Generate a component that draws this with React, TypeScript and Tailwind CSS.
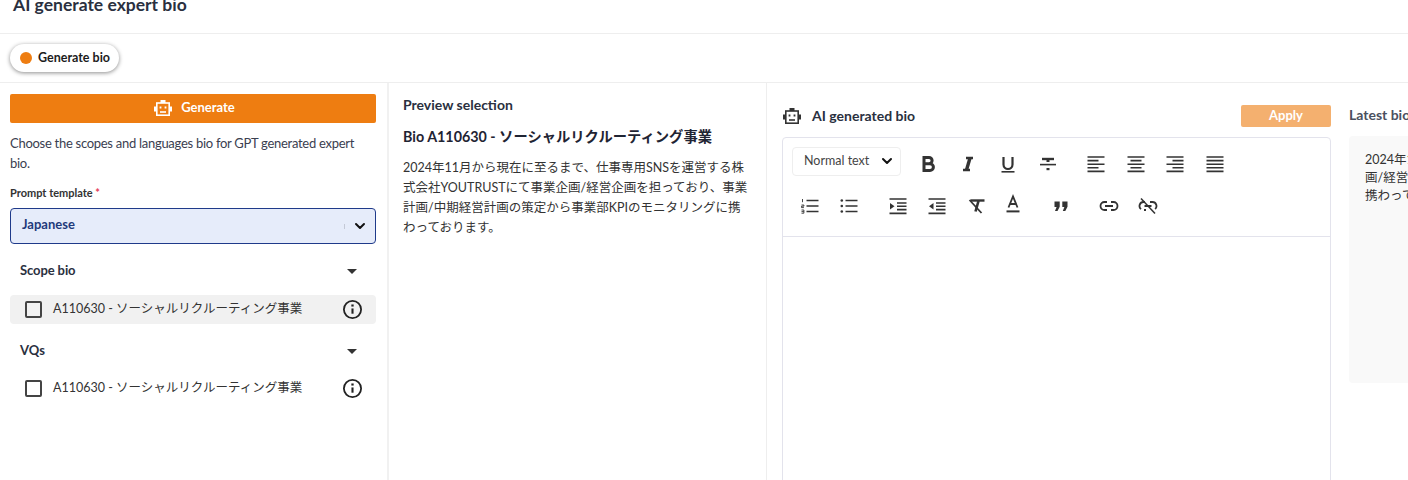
import { ChevronDown } from 'lucide-react'

const font = "font-['Lato','Noto_Sans_CJK_JP',sans-serif]"

function RobotIcon({ className }: { className?: string }) {
  return (
    <svg viewBox="0 0 20 20" className={className} fill="none" stroke="currentColor" strokeWidth="1.6">
      <rect x="3.8" y="5" width="12.4" height="12.2" />
      <rect x="7.5" y="2" width="5" height="3" fill="currentColor" stroke="none" />
      <rect x="1" y="8.5" width="2.4" height="5" fill="currentColor" stroke="none" />
      <rect x="16.6" y="8.5" width="2.4" height="5" fill="currentColor" stroke="none" />
      <path d="M7.5 8.6v2M12.5 8.6v2" strokeWidth="1.8" />
      <path d="M7 14h6" />
    </svg>
  )
}

function Ico({ children }: { children: React.ReactNode }) {
  return (
    <svg viewBox="0 0 20 20" className="h-5 w-5 text-[#333]" fill="none" stroke="currentColor" strokeWidth="1.6">
      {children}
    </svg>
  )
}

const alignPaths = {
  left: 'M1.5 3h17M1.5 6.6h11M1.5 10.2h17M1.5 13.8h11M1.5 17.4h17',
  center: 'M1.5 3h17M4.5 6.6h11M1.5 10.2h17M4.5 13.8h11M1.5 17.4h17',
  right: 'M1.5 3h17M7.5 6.6h11M1.5 10.2h17M7.5 13.8h11M1.5 17.4h17',
  justify: 'M1.5 3h17M1.5 6.6h17M1.5 10.2h17M1.5 13.8h17M1.5 17.4h17',
}

function Scope({ active }: { active?: boolean }) {
  return (
    <div className={`flex h-[29px] items-center rounded pl-[15px] pr-[13px] ${active ? 'bg-[#f1f1f1]' : ''}`}>
      <span className="h-[17px] w-[17px] rounded-[2px] border-2 border-[#444]" />
      <span className="ml-[11px] flex-1 text-[12.5px] text-[#333]">A110630 - ソーシャルリクルーティング事業</span>
      <svg viewBox="0 0 20 20" className="h-[21px] w-[21px] text-[#222]" fill="none" stroke="currentColor" strokeWidth="1.7">
        <circle cx="10" cy="10" r="8.2" />
        <path d="M10 9v5" strokeWidth="2" />
        <path d="M10 5.2v2" strokeWidth="2.2" />
      </svg>
    </div>
  )
}

function Caret() {
  return <span className="h-0 w-0 border-x-[5px] border-t-[5px] border-x-transparent border-t-[#333]" />
}

export default function App() {
  return (
    <div className={`${font} h-[480px] w-[1408px] overflow-hidden bg-white`}>
      <div className="flex h-[34px] items-end border-b border-[#eeeeee] pb-[16px] pl-[13px]">
        <h1 className="text-[17.5px] font-bold leading-[24px] text-[#2a3040]">AI generate expert bio</h1>
      </div>

      <div className="flex h-[49px] items-center border-b border-[#eeeeee] pl-[10px]">
        <div className="flex h-[28px] items-center gap-[6px] rounded-full bg-white pl-[10px] pr-[9px] shadow-[0_1px_4px_rgba(0,0,0,0.45)]">
          <span className="h-[12px] w-[12px] rounded-full bg-[#ee7d11]" />
          <span className="pt-[1px] text-[12.5px] font-bold text-[#1c1c1c]">Generate bio</span>
        </div>
      </div>

      <div className="flex h-[397px]">
        <aside className="w-[389px] shrink-0 border-r-2 border-[#f1f1f1] pl-[10px] pr-[11px] pt-[11px]">
          <button className="flex h-[29px] w-full items-center justify-center gap-[8px] rounded-[2px] bg-[#ee7d11] pb-[1px] pl-[2px] text-[13px] font-bold text-white">
            <RobotIcon className="h-5 w-5" />
            Generate
          </button>
          <p className="mt-[10px] text-[13px] leading-[20px] tracking-[-0.28px] text-[#3a4050]">
            Choose the scopes and languages bio for GPT generated expert bio.
          </p>
          <label className="mt-[13px] block text-[11px] font-bold leading-[14px] text-[#333]">
            Prompt template <span className="text-[#e53956]">*</span>
          </label>
          <div className="mt-[8px] flex h-[36px] items-center justify-between rounded border border-[#1f3a8a] bg-[#e6ecfa] pl-[11px] pr-[7px]">
            <span className="pb-[2px] text-[13px] font-bold text-[#1f3a7a]">Japanese</span>
            <div className="flex items-center gap-[7px]">
              <span className="h-[5px] w-[1px] bg-[#c4c9d6]" />
              <ChevronDown className="h-4 w-4 text-[#111]" strokeWidth={3} />
            </div>
          </div>

          <div className="mt-[17px] flex h-[20px] items-center justify-between pl-[10px] pr-[19px]">
            <span className="text-[13px] font-bold tracking-[-0.1px] text-[#2a3040]">Scope bio</span>
            <Caret />
          </div>
          <div className="mt-[14px]">
            <Scope active />
          </div>
          <div className="mt-[17px] flex h-[20px] items-center justify-between pl-[10px] pr-[19px]">
            <span className="text-[13px] font-bold text-[#2a3040]">VQs</span>
            <Caret />
          </div>
          <div className="mt-[13px]">
            <Scope />
          </div>
        </aside>

        <section className="w-[378px] shrink-0 border-r border-[#eeeeee] pl-[14px] pr-[17px] pt-[12px]">
          <h2 className="text-[14px] font-bold leading-[20px] text-[#2a3040]">Preview selection</h2>
          <h3 className="mt-[12px] text-[14.3px] font-bold leading-[20px] text-[#1f2433]">
            Bio A110630 - ソーシャルリクルーティング事業
          </h3>
          <p className="mt-[11px] text-[12.5px] leading-[20px] text-[#333]">
            2024年11月から現在に至るまで、仕事専用SNSを運営する株式会社YOUTRUSTにて事業企画/経営企画を担っており、事業計画/中期経営計画の策定から事業部KPIのモニタリングに携わっております。
          </p>
        </section>

        <section className="flex-1 overflow-hidden pl-[15px] pt-[22px]">
          <div className="flex w-[627px] gap-[18px]">
            <div className="w-[549px] shrink-0">
              <div className="flex h-[22px] items-center">
                <RobotIcon className="-mt-[1px] h-5 w-5 text-[#333]" />
                <span className="-mt-[2px] ml-[10px] flex-1 text-[14px] font-bold text-[#2a3040]">AI generated bio</span>
                <button className="h-[22px] w-[90px] rounded-[2px] bg-[#f4b06f] text-[13px] font-bold text-white">Apply</button>
              </div>
              <div className="mt-[10px] h-[400px] rounded-t border border-[#e3e3ec]">
                <div className="h-[99px] border-b border-[#e3e3ec] pl-[9px] pt-[9px]">
                  <div className="flex h-[29px] items-start">
                    <div className="flex h-[29px] w-[109px] items-center justify-between rounded border border-[#eeeeee] pb-[1px] pl-[11px] pr-[5px]">
                      <span className="text-[12.5px] text-[#444]">Normal text</span>
                      <ChevronDown className="h-4 w-4 text-[#111]" strokeWidth={3} />
                    </div>
                    <div className="ml-[17px] mt-[7px] flex gap-[20px]">
                      <Ico><path d="M6 3.5h5a3 3 0 0 1 0 6.2H6zM6 9.7h6a3.4 3.4 0 0 1 0 6.8H6z" strokeWidth="3" /></Ico>
                      <Ico><path d="M8 4h7M5 16h7" strokeWidth="2.4" /><path d="M12 4l-3.5 12" strokeWidth="3.4" /></Ico>
                      <Ico><path d="M5.5 3v7.5a4.5 4.5 0 0 0 9 0V3" strokeWidth="2.2" /><path d="M3.5 17.8h13" /></Ico>
                      <Ico><path d="M4 5h12" strokeWidth="2.4" /><path d="M10 5v3" strokeWidth="3" /><path d="M2 10.6h16" /><path d="M10 14v2.2" strokeWidth="3" /></Ico>
                    </div>
                    <div className="ml-[28px] mt-[7px] flex gap-[19.5px]">
                      <Ico><path d={alignPaths.left} /></Ico>
                      <Ico><path d={alignPaths.center} /></Ico>
                      <Ico><path d={alignPaths.right} /></Ico>
                      <Ico><path d={alignPaths.justify} /></Ico>
                    </div>
                  </div>
                  <div className="mt-[20px] flex h-[20px] items-center pl-[8px]">
                    <Ico>
                      <path d="M6.5 4.5h12M6.5 10h12M6.5 15.5h12" />
                      <path d="M2.5 3v3.2M1.5 9h2.4v1.2H1.5v1.4h2.4M1.5 14h2.4v3.2H1.5M1.5 15.6h2.4" strokeWidth="0.9" />
                    </Ico>
                    <span className="ml-[19px]">
                      <Ico>
                        <path d="M6.5 4.5h12M6.5 10h12M6.5 15.5h12" />
                        <circle cx="2.8" cy="4.5" r="1.3" fill="currentColor" stroke="none" />
                        <circle cx="2.8" cy="10" r="1.3" fill="currentColor" stroke="none" />
                        <circle cx="2.8" cy="15.5" r="1.3" fill="currentColor" stroke="none" />
                      </Ico>
                    </span>
                    <span className="ml-[29px]">
                      <Ico>
                        <path d="M1.5 3h17M9 7h9.5M9 10.2h9.5M9 13.6h9.5M1.5 17.4h17" />
                        <path d="M2 7v6.5l4.5-3.2z" fill="currentColor" stroke="none" />
                      </Ico>
                    </span>
                    <span className="ml-[19px]">
                      <Ico>
                        <path d="M1.5 3h17M9 7h9.5M9 10.2h9.5M9 13.6h9.5M1.5 17.4h17" />
                        <path d="M6.5 7v6.5L2 10.3z" fill="currentColor" stroke="none" />
                      </Ico>
                    </span>
                    <span className="ml-[20px]">
                      <Ico>
                        <path d="M3.5 4.5h14" strokeWidth="2.4" />
                        <path d="M11.5 5l-3 10.5" strokeWidth="2.6" />
                        <path d="M2.5 4l12 13" strokeWidth="1.8" />
                      </Ico>
                    </span>
                    <span className="-mt-[4px] ml-[16px]">
                      <Ico>
                        <path d="M5.5 13.5l4.5-11 4.5 11M7 10h6" strokeWidth="1.8" />
                        <path d="M3.5 17.4h13" strokeWidth="2" />
                      </Ico>
                    </span>
                    <span className="ml-[28px]">
                      <Ico>
                        <path d="M3.5 5.5h5.2v5.2l-2.2 4.3H4l1.6-4H3.5zM11.3 5.5h5.2v5.2l-2.2 4.3h-2.5l1.6-4h-2.1z" fill="currentColor" stroke="none" />
                      </Ico>
                    </span>
                    <span className="ml-[28px]">
                      <Ico>
                        <path d="M8 6H5.5a4 4 0 0 0 0 8H8M12 6h2.5a4 4 0 0 1 0 8H12M6 10h8" strokeWidth="1.8" />
                      </Ico>
                    </span>
                    <span className="ml-[19px]">
                      <Ico>
                        <path d="M7 6H5.5a4 4 0 0 0-2.5 7.1M12 6h2.5a4 4 0 0 1 2.6 7M6.5 10h7M6 14h2" strokeWidth="1.8" />
                        <path d="M3 2.5l14 15" strokeWidth="1.5" />
                      </Ico>
                    </span>
                  </div>
                </div>
              </div>
            </div>
            <div className="w-[200px] shrink-0">
              <div className="-mt-[2px] flex h-[22px] items-center text-[14px] font-bold text-[#4a5060]">Latest bio</div>
              <div className="mt-[11px] h-[247px] w-[200px] rounded bg-[#f9f9f9] pl-[16px] pr-[10px] pt-[15px] text-[12.5px] leading-[18px] text-[#333]">
                2024年11月から現在
                <br />
                画/経営企画を担
                <br />
                携わっております
              </div>
            </div>
          </div>
        </section>
      </div>
    </div>
  )
}
